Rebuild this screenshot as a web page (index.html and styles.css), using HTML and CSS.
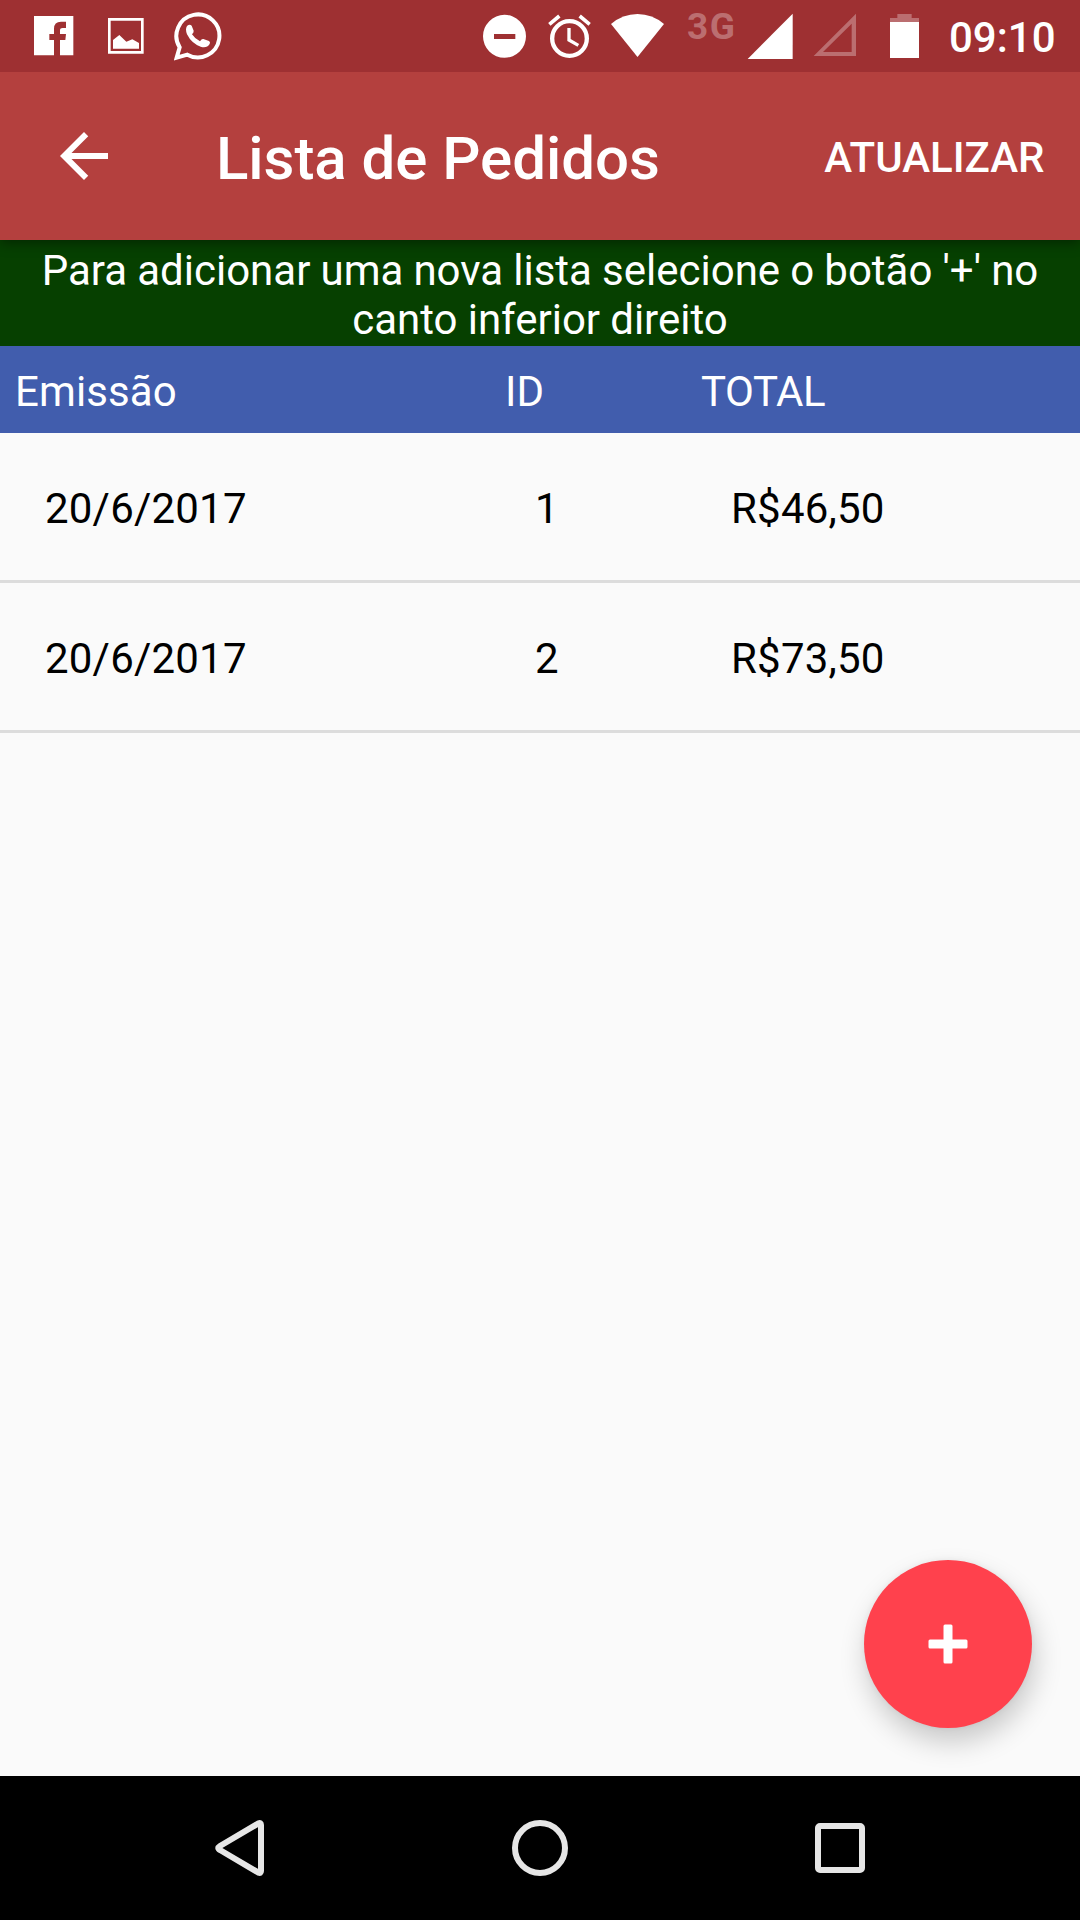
FILE: index.html
```html
<!DOCTYPE html>
<html lang="pt-BR">
<head>
<meta charset="utf-8">
<title>Lista de Pedidos</title>
<link rel="stylesheet" href="styles.css">
</head>
<body>
<div class="screen">
  <div class="status-bar">
    <svg class="facebook" viewBox="102 0 120 216"><path d="M102 48H220V166H180V120H196L198 102H180V91Q180 84 188 84H198V65H183Q162 65 162 86V102H148V120H162V166H102Z"/></svg>
    <svg class="picture" viewBox="324 0 108 216"><path fill-rule="evenodd" d="M324 54H431V161H324ZM332 62V153H423V62Z"/><path d="M339 120L358 105L379 125L397 118L417 129V146H339Z"/></svg>
    <svg class="whatsapp" viewBox="522 0 144 216"><path class="line" d="M530 173L539 142A64.500 64.500 0 1 1 562 164Z"/><path d="M561 78Q569 71 575 77L581 92Q582 97 576 103Q585 117 600 124Q605 116 610 117L627 123Q632 126 629 132Q620 146 602 140Q575 131 561 103Q555 87 561 78Z"/></svg>
    <svg class="dnd" viewBox="69 0 129 216"><path fill-rule="evenodd" d="M69 109A64.500 64.500 0 1 1 198 109A64.500 64.500 0 1 1 69 109ZM102 102V117H166V102Z"/></svg>
    <svg class="alarm" viewBox="264 0 129 216"><circle class="ring" cx="328.500" cy="115.500" r="52"/><path class="hand" d="M327 84V120L355 136"/><path class="bell" d="M268 73L298 48M389 73L359 48"/></svg>
    <svg class="wifi" viewBox="453 0 159 216"><path d="M453 72Q488 42 532.500 42T612 72L532.500 171Z"/></svg>
    <span class="network">3G</span>
    <svg class="signal" viewBox="21 0 138 216"><path d="M23 177L158 41V177Z"/></svg>
    <svg class="signal-empty" viewBox="219 0 132 216"><path fill-rule="evenodd" d="M221 168L348 41V168ZM249 156H335V71Z"/></svg>
    <svg class="battery" viewBox="450 0 87 216"><path class="faded" d="M450 66V54H472V42H515V54H537V66Z"/><path d="M450 66H537V174H450Z"/></svg>
    <span class="clock">09:10</span>
  </div>
  <header class="app-bar">
    <svg class="back" viewBox="0 0 24 24"><path d="M20 11H7.830l5.590-5.590L12 4l-8 8 8 8 1.410-1.410L7.830 13H20v-2z"/></svg>
    <h1 class="title">Lista de Pedidos</h1>
    <span class="action">ATUALIZAR</span>
  </header>
  <p class="hint">Para adicionar uma nova lista selecione o botão '+' no canto inferior direito</p>
  <div class="columns heading"><span>Emissão</span><span>ID</span><span class="total">TOTAL</span></div>
  <main class="orders">
    <div class="columns order"><span>20/6/2017</span><span>1</span><span>R$46,50</span></div>
    <div class="columns order"><span>20/6/2017</span><span>2</span><span>R$73,50</span></div>
    <div class="fab"><svg viewBox="0 0 168 168"><rect x="79.500" y="64.500" width="9" height="39" rx="1.500"/><rect x="64.500" y="79.500" width="39" height="9" rx="1.500"/></svg></div>
  </main>
  <nav class="nav-bar">
    <svg viewBox="0 0 84 84"><path d="M22 44Q18.500 42.200 22 40L60.500 17.300Q63 16.500 63 19V65Q63 67.500 60.500 66.700Z"/></svg>
    <svg viewBox="0 0 84 84"><circle cx="42" cy="42" r="25"/></svg>
    <svg viewBox="0 0 84 84"><rect x="20" y="20" width="44" height="44" rx="2"/></svg>
  </nav>
</div>
</body>
</html>
```
FILE: styles.css
```css
* { box-sizing: border-box; }
body { margin: 0; background: #fafafa; font-family: Roboto, sans-serif; }
svg { display: block; flex: none; }
.screen { display: flex; flex-direction: column; width: 1080px; height: 1920px; overflow: hidden; }

.status-bar { position: relative; z-index: 2; display: flex; align-items: flex-start; height: 72px; padding-left: 34px; background: #9e3032; color: #fff; }
.status-bar svg { height: 72px; fill: #fff; }
.facebook { width: 40px; }
.picture { width: 36px; margin-left: 34px; }
.whatsapp { width: 48px; margin-left: 30px; }
.status-bar .line { fill: none; stroke: #fff; stroke-width: 12; }
.dnd { width: 43px; margin-left: 261px; }
.alarm { width: 43px; margin-left: 22px; }
.alarm .ring { fill: none; stroke: #fff; stroke-width: 13; }
.alarm .hand { fill: none; stroke: #fff; stroke-width: 10; }
.alarm .bell { fill: none; stroke: #fff; stroke-width: 11; }
.wifi { width: 53px; margin-left: 20px; }
.network { width: 60px; margin: 5px 0 0 23px; color: #bb6e70; font-size: 37px; font-weight: 700; letter-spacing: 1.5px; white-space: nowrap; }
.signal { width: 46px; }
.signal-empty { width: 44px; margin-left: 20px; }
.status-bar .signal-empty, .battery .faded { fill: #bb6e70; }
.battery { width: 29px; margin-left: 33px; }
.clock { margin: 13px 0 0 30px; font-size: 42px; font-weight: 500; line-height: 49px; }

.app-bar { position: relative; z-index: 1; display: flex; align-items: flex-start; height: 168px; padding: 0 35.5px 0 48px; background: #b4403e; color: #fff; box-shadow: 0 3px 12px rgba(0, 0, 0, .4); }
.back { width: 72px; height: 72px; margin-top: 48px; fill: #fff; }
.title { margin: 51px 0 0 96px; font-size: 60px; font-weight: 500; line-height: 71px; letter-spacing: -.05px; }
.action { margin: 61px 0 0 auto; font-size: 42px; font-weight: 500; line-height: 49px; }

.hint { height: 106px; margin: 0; padding: 6px 36px 0; background: #064000; color: #fff; font-size: 42px; line-height: 49px; text-align: center; word-spacing: -.3px; }

.columns { display: grid; grid-template-columns: 490px 196px 1fr; font-size: 42px; line-height: 49px; }
.heading { height: 87px; padding: 21px 0 0 15px; background: #415dad; color: #fff; letter-spacing: .1px; }
.heading .total { letter-spacing: -.4px; }
.orders { position: relative; flex: 1; }
.order { height: 150px; padding: 51px 0 0 45px; border-bottom: 3px solid #dcdcdc; color: #000; letter-spacing: .2px; }

.fab { position: absolute; right: 48px; bottom: 48px; width: 168px; height: 168px; border-radius: 50%; background: #ff414d; box-shadow: 3px 14px 28px rgba(0, 0, 0, .2), 0 0 6px rgba(0, 0, 0, .06); }
.fab svg { fill: #fff; }

.nav-bar { display: flex; justify-content: center; align-items: center; gap: 216px; height: 144px; background: #000; }
.nav-bar svg { width: 84px; height: 84px; fill: none; stroke: #e6e6e6; stroke-width: 6; stroke-linejoin: round; }
```
